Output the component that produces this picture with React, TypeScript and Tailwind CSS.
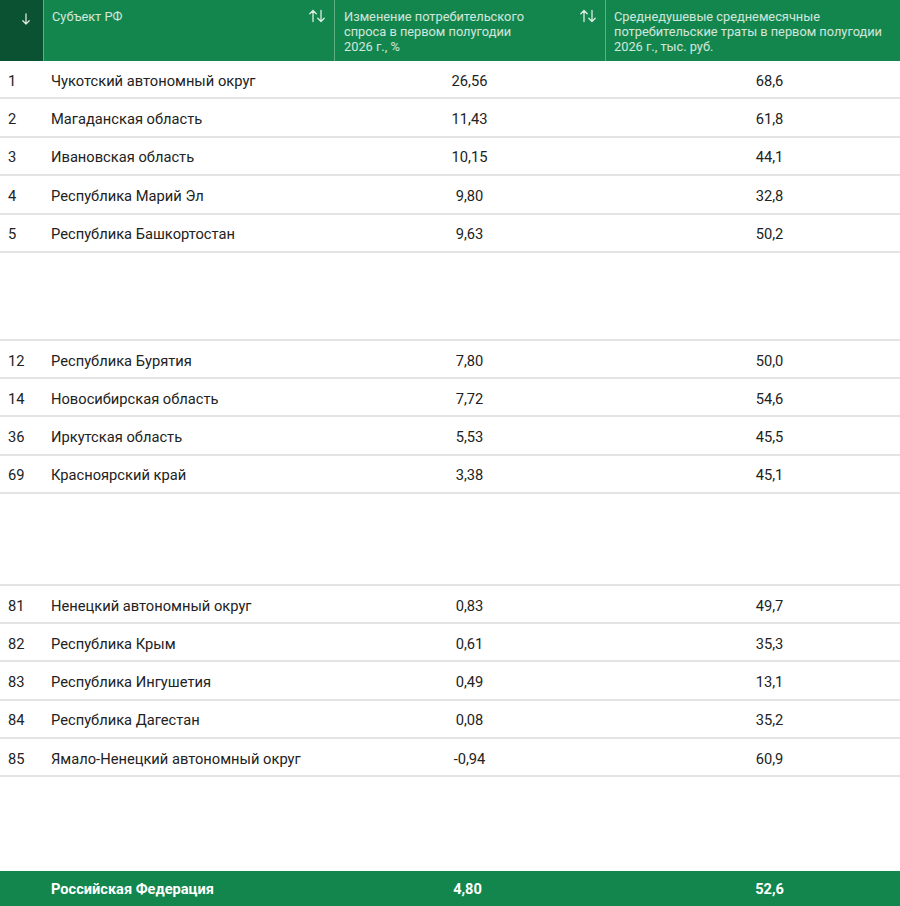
import React from "react";

type Row = { n: string; name: string; a: string; b: string };

const block1: Row[] = [
  { n: "1", name: "Чукотский автономный округ", a: "26,56", b: "68,6" },
  { n: "2", name: "Магаданская область", a: "11,43", b: "61,8" },
  { n: "3", name: "Ивановская область", a: "10,15", b: "44,1" },
  { n: "4", name: "Республика Марий Эл", a: "9,80", b: "32,8" },
  { n: "5", name: "Республика Башкортостан", a: "9,63", b: "50,2" },
];
const block2: Row[] = [
  { n: "12", name: "Республика Бурятия", a: "7,80", b: "50,0" },
  { n: "14", name: "Новосибирская область", a: "7,72", b: "54,6" },
  { n: "36", name: "Иркутская область", a: "5,53", b: "45,5" },
  { n: "69", name: "Красноярский край", a: "3,38", b: "45,1" },
];
const block3: Row[] = [
  { n: "81", name: "Ненецкий автономный округ", a: "0,83", b: "49,7" },
  { n: "82", name: "Республика Крым", a: "0,61", b: "35,3" },
  { n: "83", name: "Республика Ингушетия", a: "0,49", b: "13,1" },
  { n: "84", name: "Республика Дагестан", a: "0,08", b: "35,2" },
  { n: "85", name: "Ямало-Ненецкий автономный округ", a: "-0,94", b: "60,9" },
];

const grid = "grid grid-cols-[43px_291px_271px_1fr]";

function SortIcon() {
  return (
    <svg
      className="absolute right-[9px] top-[9px]"
      width="16"
      height="14"
      viewBox="0 0 16 14"
      fill="none"
      stroke="rgba(255,255,255,0.85)"
      strokeWidth="1.3"
      strokeLinecap="round"
      strokeLinejoin="round"
    >
      <path d="M4 12.5V1.5M0.8 4.8L4 1.5L7.2 4.8" />
      <path d="M12 1.5V12.5M8.8 9.2L12 12.5L15.2 9.2" />
    </svg>
  );
}

function BodyRow({ r, h }: { r: Row; h: string }) {
  return (
    <div className={`${grid} ${h} shrink-0 items-center pt-[3px] border-b-2 border-[#e4e4e4] text-[14.7px] text-[#222]`}>
      <div className="pl-[8px]">{r.n}</div>
      <div className="pl-[8px]">{r.name}</div>
      <div className="text-center">{r.a}</div>
      <div className="text-center pl-[34px]">{r.b}</div>
    </div>
  );
}

function Line() {
  return <div className="h-[2px] shrink-0 bg-[#e4e4e4]" />;
}

export default function App() {
  return (
    <div
      className="w-[900px] h-[906px] bg-white overflow-hidden flex flex-col"
      style={{ fontFamily: "Roboto, 'Liberation Sans', sans-serif" }}
    >
      <div className={`${grid} h-[61px] shrink-0 bg-[#12864c] text-[12.8px] leading-[15px] text-white/80`}>
        <div className="bg-[#0b5233] relative">
          <svg
            className="absolute left-[22px] top-[13px]"
            width="8"
            height="12"
            viewBox="0 0 8 12"
            fill="none"
            stroke="rgba(255,255,255,0.85)"
            strokeWidth="1.3"
            strokeLinecap="round"
            strokeLinejoin="round"
          >
            <path d="M4 0.8V11M0.8 7.8L4 11L7.2 7.8" />
          </svg>
        </div>
        <div className="border-l border-[#5fae82] relative pl-[8px] pt-[9px]">
          Субъект РФ
          <SortIcon />
        </div>
        <div className="border-l border-[#5fae82] relative pl-[9px] pt-[9px]">
          Изменение потребительского
          <br />
          спроса в первом полугодии
          <br />
          2026 г., %
          <SortIcon />
        </div>
        <div className="border-l border-[#5fae82] relative pl-[8px] pt-[9px]">
          Среднедушевые среднемесячные
          <br />
          потребительские траты в первом полугодии
          <br />
          2026 г., тыс. руб.
        </div>
      </div>

      {block1.map((r) => (
        <BodyRow key={r.n} r={r} h="h-[38.4px]" />
      ))}
      <div className="h-[86px] shrink-0" />
      <Line />
      {block2.map((r) => (
        <BodyRow key={r.n} r={r} h="h-[38.2px]" />
      ))}
      <div className="h-[90.2px] shrink-0" />
      <Line />
      {block3.map((r) => (
        <BodyRow key={r.n} r={r} h="h-[38.3px]" />
      ))}
      <div className="flex-1" />
      <div className={`${grid} h-[35px] shrink-0 items-center pt-[3px] bg-[#12864c] text-[14.6px] font-bold text-white`}>
        <div />
        <div className="pl-[8px]">Российская Федерация</div>
        <div className="text-center pr-[4px]">4,80</div>
        <div className="text-center pl-[34px]">52,6</div>
      </div>
    </div>
  );
}
